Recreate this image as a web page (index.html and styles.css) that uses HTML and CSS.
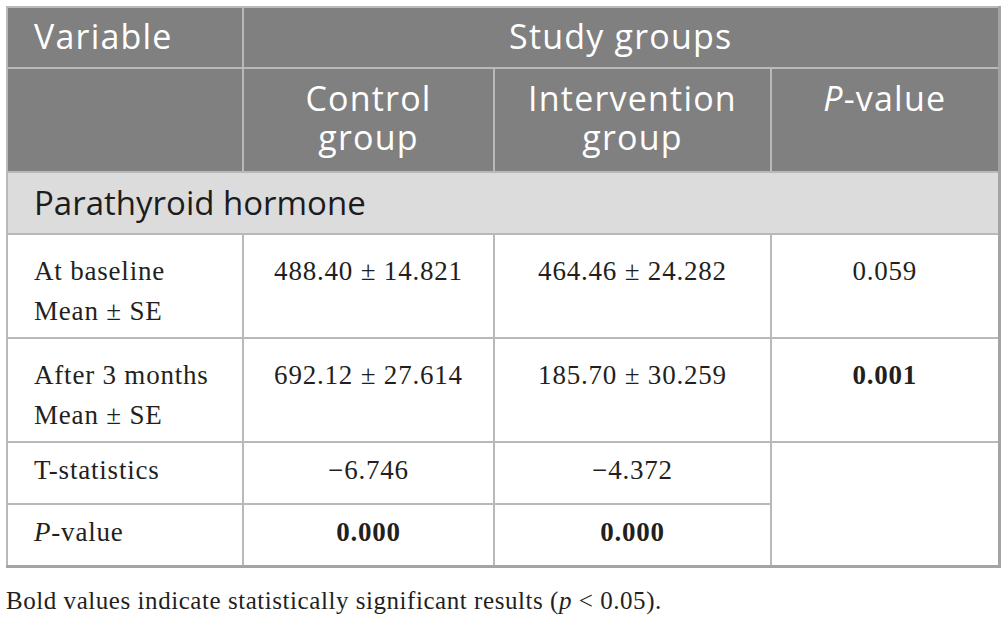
FILE: index.html
```html
<!DOCTYPE html>
<html>
<head>
<meta charset="utf-8">
<link rel="stylesheet" href="styles.css">
</head>
<body>
<div class="wrap">
<table class="data">
  <colgroup>
    <col class="c1"><col class="c2"><col class="c3"><col class="c4">
  </colgroup>
  <thead>
    <tr class="h1">
      <th class="left">Variable</th>
      <th colspan="3">Study groups</th>
    </tr>
    <tr class="h2">
      <th></th>
      <th>Control<br>group</th>
      <th>Intervention<br>group</th>
      <th><i>P</i>-value</th>
    </tr>
  </thead>
  <tbody>
    <tr class="sec">
      <td colspan="4">Parathyroid hormone</td>
    </tr>
    <tr class="tall">
      <td class="left">At baseline<br>Mean ± SE</td>
      <td>488.40 ± 14.821</td>
      <td>464.46 ± 24.282</td>
      <td>0.059</td>
    </tr>
    <tr class="tall">
      <td class="left">After 3 months<br>Mean ± SE</td>
      <td>692.12 ± 27.614</td>
      <td>185.70 ± 30.259</td>
      <td><b>0.001</b></td>
    </tr>
    <tr class="short">
      <td class="left">T-statistics</td>
      <td>−6.746</td>
      <td>−4.372</td>
      <td rowspan="2"></td>
    </tr>
    <tr class="short">
      <td class="left"><i>P</i>-value</td>
      <td><b>0.000</b></td>
      <td><b>0.000</b></td>
    </tr>
  </tbody>
</table>
<p class="note">Bold values indicate statistically significant results (<i>p</i> &lt; 0.05).</p>
</div>
</body>
</html>
```
FILE: styles.css
```css
html, body {
  margin: 0;
  padding: 0;
  background: #ffffff;
}
.wrap {
  padding: 6px 0 0 6px;
}
.data {
  border-collapse: collapse;
  table-layout: fixed;
  width: 992px;
  border-left: 2px solid #a8a8a8;
  border-top: 2px solid #b8b8b8;
  border-right: 3px solid #a4a4a4;
  border-bottom: 3px solid #a4a4a4;
}
.c1 { width: 236px; }
.c2 { width: 251px; }
.c3 { width: 277px; }
.c4 { width: 228px; }
.data th, .data td {
  border: 2px solid #b9b9b9;
  text-align: center;
  vertical-align: top;
  padding: 0;
}
.data th {
  background: #808080;
  color: #ffffff;
  font-family: "Open Sans", "Lato", sans-serif;
  font-weight: normal;
  font-size: 34px;
  letter-spacing: 1.2px;
  line-height: 39px;
}
.data th.left, .data td.left {
  text-align: left;
  padding-left: 26px;
}
.h1 { height: 61px; }
.h1 th { padding-top: 9px; }
.h2 { height: 104px; }
.h2 th { padding-top: 10px; }
.data td {
  font-family: "Liberation Serif", "Times New Roman", serif;
  font-size: 27px;
  letter-spacing: 0.8px;
  line-height: 40px;
  color: #231f20;
}
.data .sec td {
  background: #dcdcdc;
  color: #1c1c1c;
  font-family: "Open Sans", "Lato", sans-serif;
  font-size: 33px;
  letter-spacing: 0;
  line-height: 39px;
  text-align: left;
  padding: 10px 0 0 26px;
  height: 62px;
  box-sizing: border-box;
}
.data .tall td { height: 104px; box-sizing: border-box; padding-top: 16px; }
.data .short td { height: 62px; box-sizing: border-box; padding-top: 7px; }
.note {
  margin: 18px 0 0 0;
  font-family: "Liberation Serif", "Times New Roman", serif;
  font-size: 25px;
  letter-spacing: 0.55px;
  color: #231f20;
  line-height: 30px;
}
```
